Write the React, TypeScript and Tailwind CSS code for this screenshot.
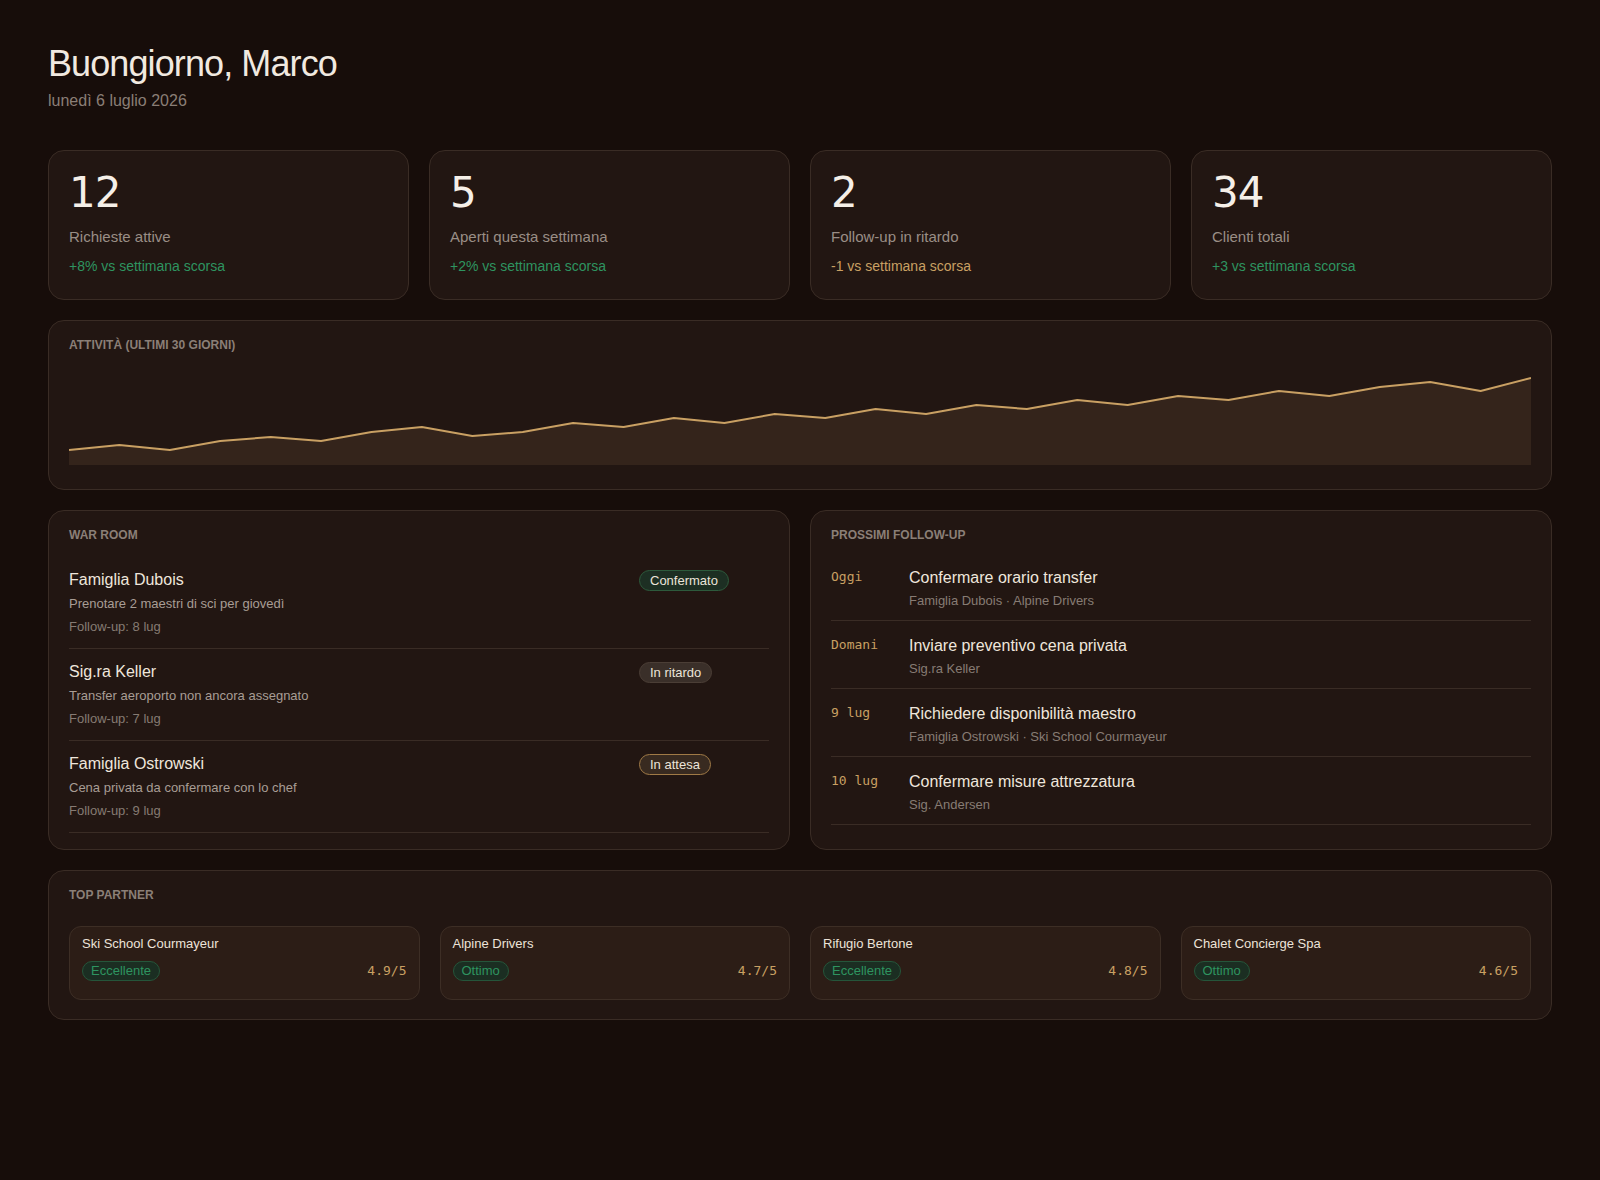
import React from "react";

const stats = [
  { n: "12", label: "Richieste attive", change: "+8% vs settimana scorsa", tone: "green" },
  { n: "5", label: "Aperti questa settimana", change: "+2% vs settimana scorsa", tone: "green" },
  { n: "2", label: "Follow-up in ritardo", change: "-1 vs settimana scorsa", tone: "amber" },
  { n: "34", label: "Clienti totali", change: "+3 vs settimana scorsa", tone: "green" },
];

const chartY = [85, 80, 85, 76, 72, 76, 67, 62, 71, 67, 58, 62, 53, 58, 49, 53, 44, 49, 40, 44, 35, 40, 31, 35, 26, 31, 22, 17, 26, 13];

const warRoom = [
  { name: "Famiglia Dubois", desc: "Prenotare 2 maestri di sci per giovedì", fu: "Follow-up: 8 lug", status: "Confermato", kind: "ok" },
  { name: "Sig.ra Keller", desc: "Transfer aeroporto non ancora assegnato", fu: "Follow-up: 7 lug", status: "In ritardo", kind: "late" },
  { name: "Famiglia Ostrowski", desc: "Cena privata da confermare con lo chef", fu: "Follow-up: 9 lug", status: "In attesa", kind: "wait" },
];

const followUps = [
  { d: "Oggi", t: "Confermare orario transfer", s: "Famiglia Dubois · Alpine Drivers" },
  { d: "Domani", t: "Inviare preventivo cena privata", s: "Sig.ra Keller" },
  { d: "9 lug", t: "Richiedere disponibilità maestro", s: "Famiglia Ostrowski · Ski School Courmayeur" },
  { d: "10 lug", t: "Confermare misure attrezzatura", s: "Sig. Andersen" },
];

const partners = [
  { name: "Ski School Courmayeur", tag: "Eccellente", r: "4.9/5" },
  { name: "Alpine Drivers", tag: "Ottimo", r: "4.7/5" },
  { name: "Rifugio Bertone", tag: "Eccellente", r: "4.8/5" },
  { name: "Chalet Concierge Spa", tag: "Ottimo", r: "4.6/5" },
];

function Badge({ kind, children }: { kind: string; children: React.ReactNode }) {
  const cls =
    kind === "ok"
      ? "bg-[#1d2f23] border-[#2d5a3c]"
      : kind === "late"
      ? "bg-[#3a2f29] border-[#4b3e36]"
      : "bg-[#382a20] border-[#a07a46]";
  return (
    <span className={`inline-block rounded-full border px-2.5 py-0.5 text-[13px] leading-[15px] text-[#ece4da] ${cls}`}>
      {children}
    </span>
  );
}

function SectionTitle({ children, className = "" }: { children: React.ReactNode; className?: string }) {
  return <div className={`text-xs font-bold uppercase leading-4 text-[#8b7f77] ${className}`}>{children}</div>;
}

function Chart() {
  const w = 1460;
  const step = w / (chartY.length - 1);
  const pts = chartY.map((y, i) => `${(i * step).toFixed(1)},${y}`).join(" ");
  const area = `0,100 ${pts} ${w},100`;
  return (
    <svg viewBox={`0 0 ${w} 100`} preserveAspectRatio="none" className="block h-[100px] w-full">
      <polygon points={area} fill="#34241b" />
      <polyline points={pts} fill="none" stroke="#c9a063" strokeWidth={2} strokeLinejoin="round" vectorEffect="non-scaling-stroke" />
    </svg>
  );
}

export default function App() {
  return (
    <div className="min-h-screen bg-[#170d0a] font-['Liberation_Sans',Arial,sans-serif] text-[#efe7de]">
      <div className="px-12 pt-11 pb-10">
        <h1 className="text-4xl leading-10 tracking-tight text-[#f1e9e0]">Buongiorno, Marco</h1>
        <div className="mt-[5px] text-base leading-6 text-[#8a7e76]">lunedì 6 luglio 2026</div>

        <div className="mt-[37px] grid grid-cols-4 gap-5">
          {stats.map((s) => (
            <div key={s.label} className="rounded-2xl border border-[#3a2c25] bg-[#221612] px-5 pt-5 pb-[22px]">
              <div className="font-['DejaVu_Sans',sans-serif] text-[42px] leading-[44px] tracking-tight text-[#f5efe8]">{s.n}</div>
              <div className="mt-[11px] text-[15px] leading-[22.5px] text-[#9a8e86]">{s.label}</div>
              <div className={`mt-[7px] text-sm leading-[21px] ${s.tone === "green" ? "text-[#2e9460]" : "text-[#c9a063]"}`}>{s.change}</div>
            </div>
          ))}
        </div>

        <div className="mt-5 rounded-2xl border border-[#3a2c25] bg-[#221612] px-5 pt-4 pb-6">
          <SectionTitle className="mb-3">Attività (ultimi 30 giorni)</SectionTitle>
          <Chart />
        </div>

        <div className="mt-5 grid grid-cols-2 gap-5">
          <div className="rounded-2xl border border-[#3a2c25] bg-[#221612] px-5 py-4">
            <SectionTitle className="mb-[14px]">War Room</SectionTitle>
            <div>
              {warRoom.map((w) => (
                <div key={w.name} className="flex border-b border-[#3a2c25] pt-[11px] pb-[11px]">
                  <div className="flex-1">
                    <div className="text-base leading-6 text-[#efe6dc]">{w.name}</div>
                    <div className="mt-0.5 text-[13px] leading-[19.5px] text-[#a89d95]">{w.desc}</div>
                    <div className="mt-1 text-[13px] leading-[19.5px] text-[#867b73]">{w.fu}</div>
                  </div>
                  <div className="w-[130px] shrink-0">
                    <Badge kind={w.kind}>{w.status}</Badge>
                  </div>
                </div>
              ))}
            </div>
          </div>

          <div className="rounded-2xl border border-[#3a2c25] bg-[#221612] px-5 py-4">
            <SectionTitle className="mb-[10px]">Prossimi follow-up</SectionTitle>
            <div>
              {followUps.map((f) => (
                <div key={f.t} className="flex items-start border-b border-[#3a2c25] pt-[13px] pb-[9.5px]">
                  <div className="w-[78px] shrink-0 font-['DejaVu_Sans_Mono',monospace] text-[13px] leading-[22px] text-[#c9a063]">{f.d}</div>
                  <div className="flex-1">
                    <div className="text-base leading-6 text-[#efe6dc]">{f.t}</div>
                    <div className="mt-px text-[13px] leading-[19.5px] text-[#877c74]">{f.s}</div>
                  </div>
                </div>
              ))}
            </div>
          </div>
        </div>

        <div className="mt-5 rounded-2xl border border-[#3a2c25] bg-[#221612] px-5 pt-4 pb-[19px]">
          <SectionTitle className="mb-[23px]">Top partner</SectionTitle>
          <div className="grid grid-cols-4 gap-5">
            {partners.map((p) => (
              <div key={p.name} className="rounded-xl border border-[#3d2e25] bg-[#2c1d16] px-3 pt-[7px] pb-[18px]">
                <div className="text-[13px] leading-[19.5px] text-[#ece3d9]">{p.name}</div>
                <div className="mt-2 flex items-center justify-between">
                  <span className="inline-block rounded-full border border-[#25553a] bg-[#1b2e22] px-2 py-px text-[13px] leading-4 text-[#2e9460]">{p.tag}</span>
                  <span className="font-['DejaVu_Sans_Mono',monospace] text-[13px] leading-[19.5px] text-[#c9a063]">{p.r}</span>
                </div>
              </div>
            ))}
          </div>
        </div>
      </div>
    </div>
  );
}
